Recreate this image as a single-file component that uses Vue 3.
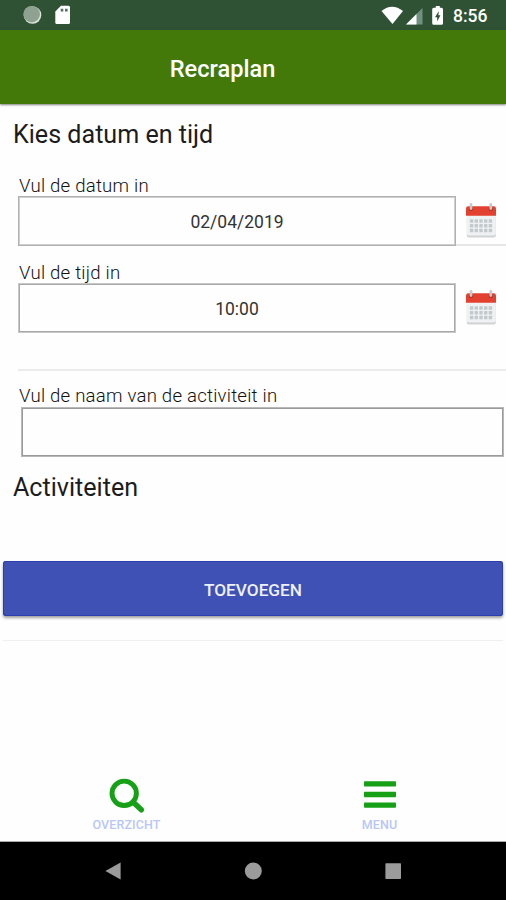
<script setup>
const pickers = [
  { id: 'date', label: 'Vul de datum in', value: '02/04/2019' },
  { id: 'time', label: 'Vul de tijd in', value: '10:00' },
]
const dotColumns = [8.2, 12.9, 17.6, 22.3, 27]
const dotRows = [17.3, 22, 26.7]
</script>

<template>
  <div class="screen">
    <div class="status">
      <svg class="sync" width="20" height="20" viewBox="0 0 20 20">
        <circle cx="10.5" cy="10" r="8.8" fill="#dce5da" />
        <circle cx="9.7" cy="9.2" r="8.3" fill="#8fa291" />
      </svg>
      <svg class="card" width="16" height="20" viewBox="0 0 16 20">
        <path d="M6 0.8H13.5Q15 .8 15 2.3V17.5Q15 19 13.5 19H1.8Q.3 19 .3 17.5V6.5Z" fill="#fff" />
        <path d="M5.7 3.7h2.6v2.8H5.7zM10 3.7h2.6v2.8H10z" fill="#52705b" />
      </svg>
      <svg class="system" width="66" height="22" viewBox="0 0 66 22">
        <path d="M.5 7Q11 -1.5 22 7L11.5 20Z" fill="#fff" />
        <path d="M25 20.5L41.5 4V20.5Z" fill="#729080" />
        <path d="M25 20.5L35.5 10V20.5Z" fill="#fff" />
        <path d="M54.8 2h4v1.8h1.7q1.5 0 1.5 1.5v14q0 1.5-1.5 1.5h-7.8q-1.5 0-1.5-1.5v-14q0-1.5 1.5-1.5h2.1z" fill="#fff" />
        <path d="M57.8 7l-3.8 6.2h2.2v4.3l3.2-6.3h-2z" fill="#2f5235" />
      </svg>
      <span class="clock">8:56</span>
    </div>

    <header class="bar"><span class="title">Recraplan</span></header>

    <main class="content">
      <h1 class="heading first">Kies datum en tijd</h1>
      <div v-for="p in pickers" :key="p.id" class="picker" :class="p.id">
        <div class="label"><span>{{ p.label }}</span></div>
        <div class="row">
          <div class="field"><span>{{ p.value }}</span></div>
          <div class="side">
            <svg width="32" height="37" viewBox="0 0 32 37">
              <rect x="1.8" y="14" width="29" height="21.5" rx="2" fill="#cfd3d5" />
              <rect x="1.8" y="12" width="29" height="21.5" rx="2" fill="#eff1f2" />
              <path d="M1 13.8V6.5Q1 4.3 3.2 4.3H28.8Q31 4.3 31 6.5V13.8Z" fill="#e2412f" />
              <g fill="#c3cace">
                <template v-for="y in dotRows" :key="y">
                  <rect v-for="x in dotColumns" :key="x" :x="x - 3.3" :y="y" width="3.4" height="3.5" rx=".5" />
                </template>
              </g>
              <g fill="#a93529"><circle cx="6" cy="6.8" r="2.2" /><circle cx="25.8" cy="6.8" r="2.2" /></g>
              <path d="M6 2.5V6.5M25.8 2.5V6.5" stroke="#c8c9c9" stroke-width="2.8" stroke-linecap="round" />
            </svg>
          </div>
        </div>
      </div>
      <div class="activity">
        <div class="label name"><span>Vul de naam van de activiteit in</span></div>
        <input class="name-input" aria-label="Naam" />
      </div>
      <h2 class="heading second">Activiteiten</h2>
      <button class="add"><span>TOEVOEGEN</span></button>
      <div class="rule"></div>
    </main>

    <nav class="tabs">
      <div class="tab">
        <svg width="36" height="36" viewBox="0 0 36 36" fill="none" stroke="#15a015">
          <circle cx="15.2" cy="15.3" r="12.2" stroke-width="4.9" />
          <path d="M24 24L32.3 31.8" stroke-width="5.4" stroke-linecap="round" />
        </svg>
        <span class="tab-label">OVERZICHT</span>
      </div>
      <div class="tab">
        <svg width="36" height="36" viewBox="0 0 36 36" fill="#15a015">
          <rect x="2" y="3.2" width="32" height="5.4" rx=".8" />
          <rect x="2" y="13.8" width="32" height="5.4" rx=".8" />
          <rect x="2" y="24.4" width="32" height="5.4" rx=".8" />
        </svg>
        <span class="tab-label">MENU</span>
      </div>
    </nav>

    <footer class="system-nav">
      <svg width="18" height="20" viewBox="0 0 18 20"><path d="M1.4 10L16.6 1.5V18.5Z" fill="#9b9b9b" /></svg>
      <svg width="18" height="20" viewBox="0 0 18 20"><circle cx="9.3" cy="10" r="8.5" fill="#9b9b9b" /></svg>
      <svg width="18" height="20" viewBox="0 0 18 20"><rect x="1.4" y="2.3" width="15.6" height="15.6" rx=".7" fill="#9b9b9b" /></svg>
    </footer>
  </div>
</template>

<style>
body { margin: 0; background: #fefefe; }
</style>

<style scoped>
.screen { width: 506px; height: 900px; display: flex; flex-direction: column; overflow: hidden; background: #fefefe; font-family: Roboto, sans-serif; box-sizing: border-box; }
.screen * { box-sizing: border-box; }
svg { display: block; flex: none; }
.status { height: 30px; flex: none; display: flex; align-items: center; background: #2f5235; padding-left: 22px; color: #fff; }
.card { margin-left: 13px; }
.system { margin-left: 310px; }
.clock { margin-left: 6px; padding-top: 2px; font-size: 17.5px; font-weight: 500; line-height: 28px; }
.bar { height: 74px; flex: none; background: #437909; display: flex; justify-content: center; align-items: center; padding-right: 61px; padding-top: 4px; box-shadow: 0 1px 2px rgba(0, 0, 0, .5); color: #fff; }
.title { font-size: 23.6px; font-weight: 500; line-height: 30px; }
.content { flex: 1; display: flex; flex-direction: column; min-height: 0; }
.heading { margin: 0; padding-left: 13px; font-size: 25.1px; font-weight: 400; line-height: 30px; color: #1c1c1c; white-space: nowrap; flex: none; }
.first { padding-top: 16px; height: 70px; }
.picker { padding-left: 18px; flex: none; }
.date { height: 87px; }
.time { height: 108px; }
.label { height: 22px; font-size: 18.6px; letter-spacing: .22px; font-weight: 300; line-height: 24px; color: #111; white-space: nowrap; padding-left: 1px; }
.name { line-height: 22px; }
.row { display: flex; height: 50px; }
.field { width: 438px; border: 1px solid #b0b0b0; box-shadow: inset 0 0 0 1px #cfcfcf; padding-top: 2px; display: flex; align-items: center; justify-content: center; font-size: 17.5px; color: #333; }
.side { flex: 1; display: flex; padding: 6px 0 0 9px; }
.date .side { border-bottom: 2px solid #e6e6e6; }
.time .field { border-color: #c8c8c8; box-shadow: inset 0 0 0 1px #a8a8a8; }
.activity { flex: none; margin-left: 18px; height: 87px; border-top: 2px solid #ececec; padding-top: 14px; }
.name-input { display: block; width: 483px; height: 50px; margin-left: 3px; border: 1px solid #b8b8b8; box-shadow: inset 0 0 0 1px #9a9a9a; background: transparent; outline: none; padding: 0 10px; font: inherit; }
.second { padding-top: 17px; height: 105px; }
.add { width: 500px; height: 55px; flex: none; margin-left: 3px; padding: 2px 0 0; border: 0; border-radius: 3px; background: #3f51b5; color: #eef0fa; font-family: inherit; font-size: 17.2px; font-weight: 500; box-shadow: inset 0 0 0 1px #2b3fae, 0 2px 3px rgba(0, 0, 0, .38); }
.rule { height: 1px; flex: none; background: #efefef; margin: 24px 3px 0; }
.tabs { height: 65px; flex: none; display: flex; padding-top: 1px; border-bottom: 1px solid #aaa; }
.tab { flex: 1; display: flex; flex-direction: column; align-items: center; }
.tab-label { margin-top: 4px; font-size: 12.5px; font-weight: 500; letter-spacing: .1px; line-height: 14px; color: #b9c7f6; }
.system-nav { height: 58px; flex: none; background: #000; display: flex; align-items: center; justify-content: center; gap: 122px; }
</style>
